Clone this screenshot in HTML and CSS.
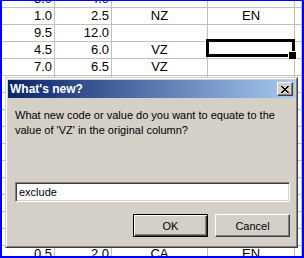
FILE: index.html
```html
<!DOCTYPE html>
<html lang="en">
<head>
  <meta charset="UTF-8">
  <title>What's new?</title>
  <link rel="stylesheet" href="styles.css">
</head>
<body>
  <div class="frame">
    <div class="sheet">
      <div class="cell num">3.0</div><div class="cell num">4.0</div><div class="cell"></div><div class="cell"></div><div class="cell"></div>
      <div class="cell num">1.0</div><div class="cell num">2.5</div><div class="cell">NZ</div><div class="cell">EN</div><div class="cell"></div>
      <div class="cell num">9.5</div><div class="cell num">12.0</div><div class="cell"></div><div class="cell"></div><div class="cell"></div>
      <div class="cell num">4.5</div><div class="cell num">6.0</div><div class="cell">VZ</div><div class="cell selected"></div><div class="cell"></div>
      <div class="cell num">7.0</div><div class="cell num">6.5</div><div class="cell">VZ</div><div class="cell"></div><div class="cell"></div>
      <!-- rows hidden behind the dialog -->
      <div class="cell"></div><div class="cell"></div><div class="cell"></div><div class="cell"></div><div class="cell"></div>
      <div class="cell"></div><div class="cell"></div><div class="cell"></div><div class="cell"></div><div class="cell"></div>
      <div class="cell"></div><div class="cell"></div><div class="cell"></div><div class="cell"></div><div class="cell"></div>
      <div class="cell"></div><div class="cell"></div><div class="cell"></div><div class="cell"></div><div class="cell"></div>
      <div class="cell"></div><div class="cell"></div><div class="cell"></div><div class="cell"></div><div class="cell"></div>
      <div class="cell"></div><div class="cell"></div><div class="cell"></div><div class="cell"></div><div class="cell"></div>
      <div class="cell"></div><div class="cell"></div><div class="cell"></div><div class="cell"></div><div class="cell"></div>
      <div class="cell"></div><div class="cell"></div><div class="cell"></div><div class="cell"></div><div class="cell"></div>
      <div class="cell"></div><div class="cell"></div><div class="cell"></div><div class="cell"></div><div class="cell"></div>
      <div class="cell"></div><div class="cell"></div><div class="cell"></div><div class="cell"></div><div class="cell"></div>
      <div class="cell num">0.5</div><div class="cell num">2.0</div><div class="cell">CA</div><div class="cell">EN</div><div class="cell"></div>
    </div>

    <div class="dialog">
      <div class="titlebar">
        <span class="title">What's new?</span>
        <button class="close" type="button">
          <svg width="8" height="7" viewBox="0 0 8 7" shape-rendering="crispEdges">
            <path d="M0 0h2v1h-2zM6 0h2v1h-2zM1 1h2v1h-2zM5 1h2v1h-2zM2 2h4v1h-4zM3 3h2v1h-2zM2 4h4v1h-4zM1 5h2v1h-2zM5 5h2v1h-2zM0 6h2v1h-2zM6 6h2v1h-2z"/>
          </svg>
        </button>
      </div>
      <div class="body">
        <p class="prompt">What new code or value do you want to equate to the value of 'VZ' in the original column?</p>
        <div class="field">exclude</div>
        <div class="buttons">
          <button class="btn default" type="button">OK</button>
          <button class="btn" type="button">Cancel</button>
        </div>
      </div>
    </div>
  </div>
</body>
</html>
```

FILE: styles.css
```css
* {
  margin: 0;
  padding: 0;
  box-sizing: border-box;
}

body {
  font-family: "Liberation Sans", Arial, sans-serif;
  background: #ffffff;
}

.frame {
  position: relative;
  width: 304px;
  height: 258px;
  overflow: hidden;
  border: 2px solid #0000ff;
  border-top-width: 1px;
  background: #ffffff;
}

/* spreadsheet behind the dialog */
.sheet {
  display: grid;
  grid-template-columns: 53px 57px 96px 87px 7px;
  grid-auto-rows: 17px;
  margin-top: -10px;
}

.cell {
  border-right: 1px solid #c0c0c0;
  border-bottom: 1px solid #c0c0c0;
  font-size: 13px;
  line-height: 16px;
  color: #000;
  text-align: center;
  white-space: nowrap;
  overflow: hidden;
}

.cell.num {
  text-align: right;
  padding-right: 2px;
}

.cell.selected {
  position: relative;
  overflow: visible;
}

.cell.selected::after {
  content: '';
  position: absolute;
  top: -3px;
  left: -2px;
  right: -1px;
  bottom: 1px;
  border: 3px solid #000;
}

.cell.selected::before {
  content: '';
  position: absolute;
  right: -3px;
  bottom: -2px;
  width: 7px;
  height: 7px;
  background: #000;
  border: 1px solid #fff;
  z-index: 1;
}

/* dialog */
.dialog {
  position: absolute;
  left: 3px;
  top: 76px;
  width: 293px;
  height: 171px;
  background: #d4d0c8;
  border: 1px solid;
  border-color: #d4d0c8 #404040 #404040 #d4d0c8;
  display: flex;
  flex-direction: column;
}

.dialog::before {
  content: '';
  position: absolute;
  inset: 0;
  border: 1px solid;
  border-color: #ffffff #808080 #808080 #ffffff;
  pointer-events: none;
}

.titlebar {
  margin: 2px 2px 0 2px;
  height: 18px;
  background: linear-gradient(to right, #0a246a, #a6caf0);
  display: flex;
  align-items: center;
  justify-content: space-between;
  padding: 0 2px 0 2px;
}

.title {
  color: #fff;
  font-weight: bold;
  font-size: 12px;
  line-height: 18px;
}

.close {
  width: 16px;
  height: 14px;
  background: #d4d0c8;
  border: 1px solid;
  border-color: #ffffff #404040 #404040 #ffffff;
  box-shadow: inset -1px -1px 0 #808080;
  display: flex;
  align-items: center;
  justify-content: center;
}

.close svg {
  fill: #000;
  display: block;
}

.body {
  flex: 1;
  display: flex;
  flex-direction: column;
  padding: 10px 7px 0 9px;
}

.prompt {
  font-size: 11px;
  line-height: 15px;
  color: #000;
  height: 74px;
}

.field {
  height: 20px;
  background: #fff;
  border: 1px solid;
  border-color: #808080 #ffffff #ffffff #808080;
  box-shadow: inset 1px 1px 0 #404040, inset -1px -1px 0 #d4d0c8;
  font-size: 11px;
  line-height: 18px;
  padding-left: 3px;
  color: #000;
}

.buttons {
  display: flex;
  justify-content: flex-end;
  gap: 7px;
  margin-top: 12px;
}

.btn {
  width: 75px;
  height: 23px;
  background: #d4d0c8;
  border: 1px solid;
  border-color: #ffffff #404040 #404040 #ffffff;
  box-shadow: inset -1px -1px 0 #808080;
  font-family: "Liberation Sans", Arial, sans-serif;
  font-size: 11px;
  color: #000;
}

.btn.default {
  border: 1px solid #000;
  box-shadow: inset 1px 1px 0 #ffffff, inset -1px -1px 0 #404040, inset -2px -2px 0 #808080;
}
```
